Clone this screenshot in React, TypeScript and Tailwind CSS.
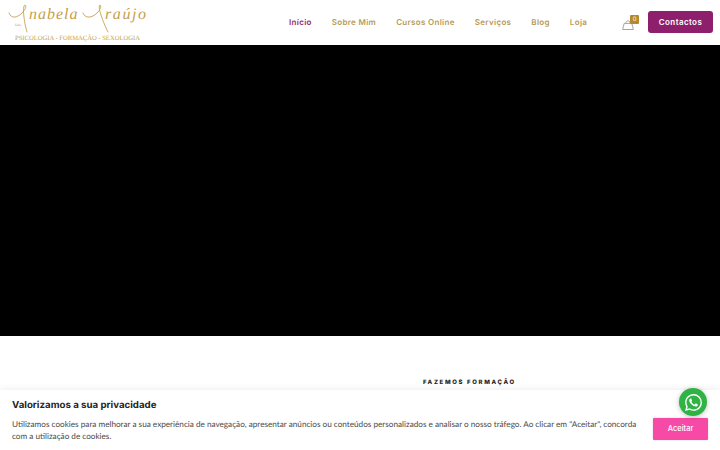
import React from "react";

const font = { fontFamily: "Inter" };

function Logo() {
  return (
    <div className="relative w-[150px] h-[45px] shrink-0 font-['Liberation_Serif',serif] text-[#c5a04b]">
      <svg className="absolute left-0 top-0" width="150" height="45" viewBox="0 0 150 45" fill="none" stroke="#c5a04b" strokeWidth="0.9" strokeLinecap="round">
        <path d="M1 13 C3 19 9 18 14 13 C17 10 19 6 17 5 C14 6 16 22 19 32" />
        <path d="M75 13 C77 19 84 18 89 13 C92 10 94 6 92 5 C89 6 95 22 100 32" />
      </svg>
      <span className="absolute left-[21px] top-[5px] text-[16px] italic leading-5 tracking-[1px]">nabela</span>
      <span className="absolute left-[97px] top-[5px] text-[16px] italic leading-5 tracking-[1.6px]">raújo</span>
      <span className="absolute left-[7px] top-[22px] text-[4px] leading-[5px]">Dra.</span>
      <span className="absolute left-[7px] top-[34px] text-[6.6px] leading-[9px] whitespace-nowrap">PSICOLOGIA - FORMAÇÃO - SEXOLOGIA</span>
    </div>
  );
}

function Bag() {
  return (
    <svg width="12" height="10" viewBox="0 0 12 10" fill="none" stroke="#9a9a9a" strokeWidth="0.9">
      <path d="M2.2 3.4 H9.8 L11.4 9.5 H0.6 Z" />
      <path d="M3.8 3.4 C3.8 0 8.2 0 8.2 3.4" />
    </svg>
  );
}

function WhatsApp() {
  return (
    <svg width="17" height="17" viewBox="0 0 24 24" fill="#fff">
      <path d="M17.47 14.38c-.3-.15-1.76-.87-2.03-.97-.27-.1-.47-.15-.67.15-.2.3-.77.97-.94 1.17-.17.2-.35.22-.64.07-.3-.15-1.26-.46-2.39-1.47-.88-.79-1.48-1.76-1.65-2.06-.17-.3-.02-.46.13-.6.13-.14.3-.35.45-.52.15-.17.2-.3.3-.5.1-.2.05-.37-.03-.52-.07-.15-.67-1.61-.92-2.21-.24-.58-.49-.5-.67-.51h-.57c-.2 0-.52.07-.79.37-.27.3-1.04 1.02-1.04 2.48s1.07 2.88 1.21 3.07c.15.2 2.1 3.2 5.08 4.49.71.31 1.26.49 1.69.62.71.23 1.36.2 1.87.12.57-.09 1.76-.72 2.01-1.41.25-.7.25-1.29.17-1.41-.07-.13-.27-.2-.57-.35zM12.05 21.8h-.01a9.87 9.87 0 0 1-5.03-1.38l-.36-.21-3.74.98 1-3.65-.24-.37a9.86 9.86 0 0 1-1.51-5.26c0-5.45 4.44-9.88 9.89-9.88 2.64 0 5.12 1.03 6.99 2.9a9.83 9.83 0 0 1 2.89 6.99c0 5.45-4.44 9.88-9.88 9.88zM20.46 3.49A11.82 11.82 0 0 0 12.05 0C5.5 0 .16 5.34.16 11.89c0 2.1.55 4.14 1.59 5.95L.06 24l6.31-1.65a11.88 11.88 0 0 0 5.68 1.45h.01c6.55 0 11.89-5.34 11.89-11.89a11.82 11.82 0 0 0-3.49-8.41z" />
    </svg>
  );
}

export default function App() {
  return (
    <div className="relative w-[720px] h-[450px] overflow-hidden bg-white [text-rendering:geometricPrecision]" style={font}>
      <header className="h-[45px] flex items-center pl-[8px] pr-[7px] bg-white">
        <Logo />
        <nav className="ml-[131px] mb-[1px] flex items-center gap-[20px] text-[8px] font-semibold tracking-[0.32px] whitespace-nowrap text-[#b89a58]">
          <span className="text-[#932a74]">Início</span>
          <span>Sobre Mim</span>
          <span>Cursos Online</span>
          <span>Serviços</span>
          <span>Blog</span>
          <span>Loja</span>
        </nav>
        <div className="ml-[35px] relative w-[18px] h-[14px] shrink-0 flex items-end">
          <Bag />
          <span className="absolute left-[8px] -top-[1px] w-[9px] h-[9px] bg-[#b5892f] rounded-[1px] text-white text-[6px] leading-[9px] text-center">0</span>
        </div>
        <button className="ml-auto mb-[1px] shrink-0 w-[65px] h-[22px] rounded-[3px] bg-[#8e1f6c] text-white text-[8px] font-semibold tracking-[0.4px]">Contactos</button>
      </header>
      <div className="h-[291px] bg-black" />
      <div className="h-[114px] pt-[43px] pl-[423px]">
        <div className="text-[6px] leading-[8px] font-extrabold tracking-[1.65px] text-[#222]">FAZEMOS FORMAÇÃO</div>
      </div>

      <div className="absolute left-0 right-0 bottom-0 h-[60px] bg-white shadow-[0_0_8px_rgba(0,0,0,0.09)] pl-[12px] pr-[12px] pt-[9px] flex">
        <div className="w-[630px]">
          <div className="text-[9.7px] leading-[14px] font-bold text-[#252525]">Valorizamos a sua privacidade</div>
          <p className="mt-[5px] font-['Lato',sans-serif] text-[8.18px] leading-[12px] text-[#4a4a4a]">Utilizamos cookies para melhorar a sua experiência de navegação, apresentar anúncios ou conteúdos personalizados e analisar o nosso tráfego. Ao clicar em "Aceitar", concorda com a utilização de cookies.</p>
        </div>
        <button className="ml-auto mt-[19px] w-[55px] h-[22px] bg-[#f74aa6] rounded-[1px] text-white text-[7.5px] font-medium shadow-[0_0_2px_rgba(0,0,0,0.2)]">Aceitar</button>
      </div>

      <div className="absolute left-[679px] top-[388px] w-[28px] h-[28px] rounded-full bg-[#2fb344] shadow-[0_1px_5px_rgba(0,0,0,0.25)] flex items-center justify-center">
        <WhatsApp />
      </div>
    </div>
  );
}
